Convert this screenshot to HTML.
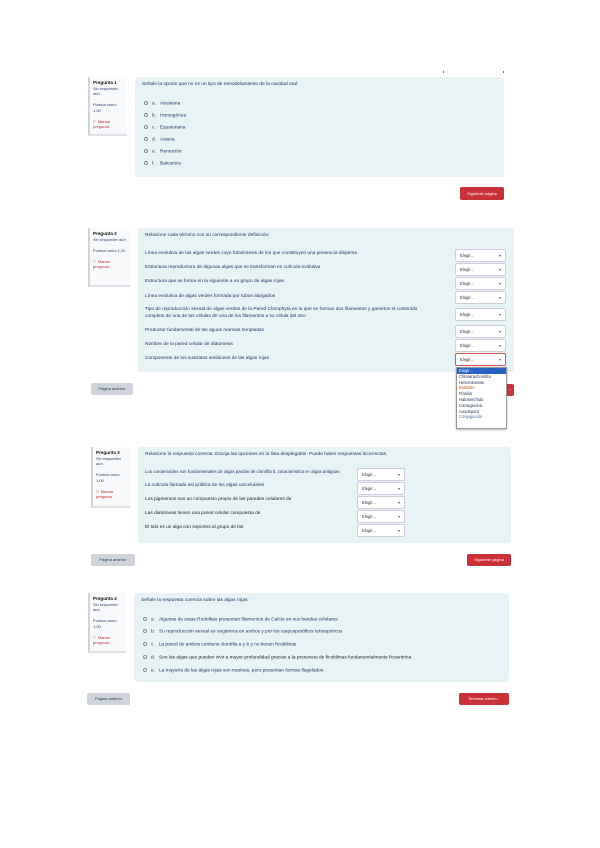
<!DOCTYPE html>
<html><head><meta charset="utf-8">
<style>
*{margin:0;padding:0;box-sizing:border-box}
body{width:600px;height:848px;background:#fff;position:relative;overflow:hidden;font-family:"Liberation Sans",sans-serif;color:#1a2f5e;font-size:4.8px;line-height:1}
.a{position:absolute;white-space:nowrap}
.info{position:absolute;background:#f8f9fa;border-left:2px solid #ced4da;border-bottom:2px solid #dee2e6;padding:3px 3px;font-size:4px;line-height:5.5px;color:#2a3f6e}
.info b{color:#111;font-weight:bold;font-size:4.6px}
.info .r{color:#c02a34}
.box{position:absolute;background:#e7f3f5;border-radius:3px}
.btn{position:absolute;border-radius:2px;font-size:4px;color:#fff;background:#ca3137;display:flex;align-items:center;justify-content:center}
.btn.g{background:#ced4da;color:#1d2f55}
.rad{display:inline-block;width:4px;height:4px;border:0.6px solid #888;border-radius:50%;background:#fff;margin-right:4px;vertical-align:middle}
.sel{position:absolute;background:#fff;border:0.7px solid #ccd;border-radius:2px;height:13px;font-size:4.2px;color:#333;padding:4px 0 0 4px}
.sel:after{content:"▾";position:absolute;right:4px;top:4px;font-size:4px;color:#555}
.dd{position:absolute;background:#fff;border:0.7px solid #999;font-size:4.2px;line-height:5.8px;color:#1d2f55;box-shadow:0 1px 2px rgba(0,0,0,.3)}
.dd div{padding-left:2px}
</style></head><body>
<div class="a" style="left:443px;top:71px;width:1px;height:2px;background:#c44"></div>
<div class="a" style="left:503px;top:71px;width:1px;height:2px;background:#c44"></div>

<!-- Q1 -->
<div class="info" style="left:88px;top:77px;width:39px;height:59px"><b>Pregunta 1</b><br>Sin responder aún<br><br>Puntúa como 1,00<br><br><span class="r">⚐ Marcar pregunta</span></div>
<div class="box" style="left:135px;top:77px;width:369px;height:100px"></div>
<div class="a" style="left:142px;top:83px">Señale la opción que no es un tipo de remodelamiento de la cavidad oral:</div>
<div class="a" style="left:144px;top:101px"><span class="rad"></span>a.&nbsp;&nbsp;&nbsp;Atresiana</div>
<div class="a" style="left:144px;top:113px"><span class="rad"></span>b.&nbsp;&nbsp;&nbsp;Homogénea</div>
<div class="a" style="left:144px;top:125px"><span class="rad"></span>c.&nbsp;&nbsp;&nbsp;Equatoriana</div>
<div class="a" style="left:144px;top:137px"><span class="rad"></span>d.&nbsp;&nbsp;&nbsp;Asiana</div>
<div class="a" style="left:144px;top:149px"><span class="rad"></span>e.&nbsp;&nbsp;&nbsp;Remoción</div>
<div class="a" style="left:144px;top:161px"><span class="rad"></span>f.&nbsp;&nbsp;&nbsp;&nbsp;Balcanica</div>
<div class="btn" style="left:460px;top:187px;width:44px;height:13px">Siguiente página</div>

<!-- Q2 -->
<div class="info" style="left:88px;top:228px;width:42px;height:59px"><b>Pregunta 2</b><br>Sin responder aún<br><br>Puntúa como 1,00<br><br><span class="r">⚐ Marcar pregunta</span></div>
<div class="box" style="left:138px;top:228px;width:376px;height:144px"></div>
<div class="a" style="left:145px;top:234px">Relacione cada término con su correspondiente definición:</div>
<div class="a" style="left:145px;top:252px">Línea evolutiva de las algas verdes cuyo fotosíntesis de los que constituyen una presencia dispersa</div>
<div class="a" style="left:145px;top:266px">Estructura reproductora de algunas algas que se transforman en cutícula evolutiva</div>
<div class="a" style="left:145px;top:280px">Estructura que se forma en la siguiente a un grupo de algas rojas</div>
<div class="a" style="left:145px;top:295px">Línea evolutiva de algas verdes formada por tubos alargados</div>
<div class="a" style="left:145px;top:308px">Tipo de reproducción sexual de algas verdes de la Pared Clorophyta en la que se forman dos filamentos y gametos el contenido</div>
<div class="a" style="left:145px;top:315px">completo de una de las células de una de los filamentos a su célula del otro</div>
<div class="a" style="left:145px;top:329px">Productor fundamental de las aguas marinas templadas</div>
<div class="a" style="left:145px;top:343px">Nombre de la pared celular de diatomeas</div>
<div class="a" style="left:145px;top:357px">Componente de los sustratos amiláceos de las algas rojas</div>
<div class="sel" style="left:455px;top:249px;width:51px">Elegir...</div>
<div class="sel" style="left:455px;top:263px;width:51px">Elegir...</div>
<div class="sel" style="left:455px;top:277px;width:51px">Elegir...</div>
<div class="sel" style="left:455px;top:291px;width:51px">Elegir...</div>
<div class="sel" style="left:455px;top:308px;width:51px">Elegir...</div>
<div class="sel" style="left:455px;top:325px;width:51px">Elegir...</div>
<div class="sel" style="left:455px;top:339px;width:51px">Elegir...</div>
<div class="sel" style="left:455px;top:353px;width:51px;border:0.8px solid #d55">Elegir...</div>
<div class="btn" style="left:506px;top:384px;width:8px;height:12px">›</div>
<div class="dd" style="left:456px;top:367px;width:51px;height:62px">
<div style="background:#2563c7;color:#fff">Elegir...</div><div>Chlorarachniofita</div><div>Heterokontas</div><div style="color:#b05010">Estilótilo</div><div>Florida</div><div>Haloserchida</div><div>Carragenina</div><div>Auxospora</div><div style="color:#506aa0">Conjugación</div></div>
<div class="btn g" style="left:91px;top:383px;width:42px;height:12px">Página anterior</div>

<!-- Q3 -->
<div class="info" style="left:91px;top:447px;width:39px;height:61px"><b>Pregunta 3</b><br>Sin responder aún<br><br>Puntúa como 1,00<br><br><span class="r">⚐ Marcar pregunta</span></div>
<div class="box" style="left:138px;top:447px;width:373px;height:96px"></div>
<div class="a" style="left:145px;top:453px">Relacione la respuesta correcta. Escoja las opciones en la lista desplegable. Puede haber respuestas incorrectas.</div>
<div class="a" style="left:145px;top:470px;font-size:4.4px">Los carotenoides son fundamentales de algas pardas de clorofila b, característica en algas antiguas</div>
<div class="a" style="left:145px;top:484px">La cutícula llamada así pública de las algas unicelulares</div>
<div class="a" style="left:145px;top:498px;color:#222">Los pigmentos son un compuesto propio de las paredes celulares de</div>
<div class="a" style="left:145px;top:512px;color:#222">Las diatomeas tienen una pared celular compuesta de</div>
<div class="a" style="left:145px;top:526px;color:#222">El talo es un alga con soportes al grupo de las</div>
<div class="sel" style="left:357px;top:468px;width:48px">Elegir...</div>
<div class="sel" style="left:357px;top:482px;width:48px">Elegir...</div>
<div class="sel" style="left:357px;top:496px;width:48px">Elegir...</div>
<div class="sel" style="left:357px;top:510px;width:48px">Elegir...</div>
<div class="sel" style="left:357px;top:524px;width:48px">Elegir...</div>
<div class="btn g" style="left:91px;top:554px;width:44px;height:12px">Página anterior</div>
<div class="btn" style="left:467px;top:554px;width:44px;height:12px">Siguiente página</div>

<!-- Q4 -->
<div class="info" style="left:88px;top:593px;width:38px;height:60px"><b>Pregunta 4</b><br>Sin responder aún<br><br>Puntúa como 1,00<br><br><span class="r">⚐ Marcar pregunta</span></div>
<div class="box" style="left:134px;top:593px;width:375px;height:89px"></div>
<div class="a" style="left:141px;top:599px">Señale la respuesta correcta sobre las algas rojas:</div>
<div class="a" style="left:143px;top:617px"><span class="rad"></span>a.&nbsp;&nbsp;&nbsp;Algunas de estas Rodofitas presentan filamentos de Calcio en sus bandas celulares</div>
<div class="a" style="left:143px;top:629px"><span class="rad"></span>b.&nbsp;&nbsp;&nbsp;Su reproducción sexual es oogámica en ambos y por los carposporófitos tetraspóricos</div>
<div class="a" style="left:143px;top:642px"><span class="rad"></span>c.&nbsp;&nbsp;&nbsp;La pared de ambos contiene clorofila a y b y no tienen ficobilinas</div>
<div class="a" style="left:143px;top:655px;color:#222"><span class="rad"></span>d.&nbsp;&nbsp;&nbsp;Son las algas que pueden vivir a mayor profundidad gracias a la presencia de ficobilinas fundamentalmente ficoeritrina</div>
<div class="a" style="left:143px;top:668px"><span class="rad"></span>e.&nbsp;&nbsp;&nbsp;La mayoría de las algas rojas son marinas, pero presentan formas flagelados</div>
<div class="btn g" style="left:87px;top:693px;width:43px;height:12px">Página anterior</div>
<div class="btn" style="left:459px;top:693px;width:50px;height:12px">Terminar intento...</div>
</body></html>
